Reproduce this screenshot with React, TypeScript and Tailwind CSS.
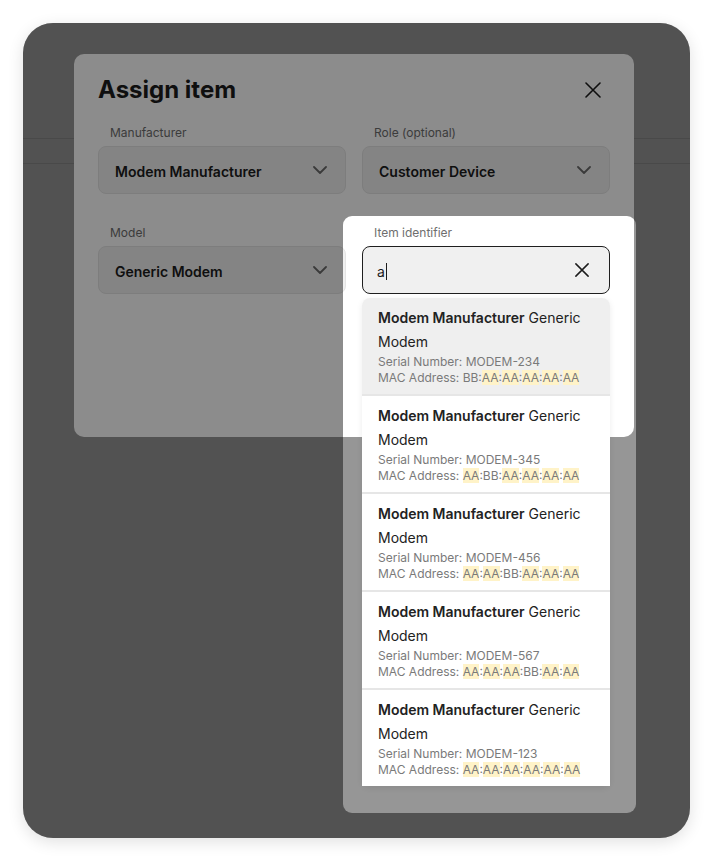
import React from "react";

type Option = {
  serial: string;
  mac: string[];
};

const options: Option[] = [
  { serial: "MODEM-234", mac: ["BB", "AA", "AA", "AA", "AA", "AA"] },
  { serial: "MODEM-345", mac: ["AA", "BB", "AA", "AA", "AA", "AA"] },
  { serial: "MODEM-456", mac: ["AA", "AA", "BB", "AA", "AA", "AA"] },
  { serial: "MODEM-567", mac: ["AA", "AA", "AA", "BB", "AA", "AA"] },
  { serial: "MODEM-123", mac: ["AA", "AA", "AA", "AA", "AA", "AA"] },
];

function Chevron() {
  return (
    <svg width="14" height="8" viewBox="0 0 14 8" fill="none" className="shrink-0">
      <path d="M1 1l6 6 6-6" stroke="#6b6b6b" strokeWidth="1.8" strokeLinecap="round" strokeLinejoin="round" />
    </svg>
  );
}

function Cross({ size, stroke = 2 }: { size: number; stroke?: number }) {
  return (
    <svg width={size} height={size} viewBox="0 0 16 16" fill="none" className="shrink-0">
      <path d="M1 1l14 14M15 1L1 15" stroke="#1c1c1c" strokeWidth={stroke} strokeLinecap="round" />
    </svg>
  );
}

function SelectField({ label, value }: { label: string; value: string }) {
  return (
    <div className="flex flex-col">
      <span className="pl-3 text-[12px] leading-[20px] text-[#6e6e6e]">{label}</span>
      <div className="mt-[3px] flex h-[48px] items-center justify-between rounded-[8px] border border-[#e4e4e4] bg-[#f0f0f0] pl-4 pr-[18px]">
        <span className="pt-[2px] text-[14px] font-semibold text-[#1c1c1c]">{value}</span>
        <Chevron />
      </div>
    </div>
  );
}

function OptionRow({ option, active, last }: { option: Option; active: boolean; last: boolean }) {
  return (
    <div
      className={`px-4 py-2 ${active ? "rounded-t-[8px] bg-[#efefef]" : "bg-white"} ${
        last ? "" : "border-b-2 border-[#e6e6e6]"
      }`}
    >
      <div className="text-[14px] leading-[24px] text-[#222]">
        <span className="font-semibold">Modem Manufacturer</span> Generic Modem
      </div>
      <div className="text-[12px] leading-[16px] text-[#7a7a7a]">Serial Number: {option.serial}</div>
      <div className="text-[12px] leading-[16px] text-[#7a7a7a]">
        MAC Address:{" "}
        {option.mac.map((part, i) => (
          <React.Fragment key={i}>
            {i > 0 && ":"}
            {part === "AA" ? <span className="bg-[#fff3c8]">{part}</span> : part}
          </React.Fragment>
        ))}
      </div>
    </div>
  );
}

export default function App() {
  return (
    <div className="h-[862px] w-[713px] bg-white pl-[23px] pt-[23px] font-['Inter','Liberation_Sans',sans-serif]">
      <div className="relative h-[815px] w-[667px] overflow-hidden rounded-[30px] bg-white shadow-[0_4px_16px_rgba(0,0,0,0.12)]">
        {/* page behind */}
        <div className="h-[116px] border-b border-[#e2e2e2]" />
        <div className="h-[25px] border-b border-[#e2e2e2]" />

        {/* modal backdrop */}
        <div className="absolute inset-0 bg-[rgba(0,0,0,0.41)] pl-[51px] pt-[31px]">
          <div className="relative h-[383px] w-[560px] rounded-[10px] bg-white px-6 pt-[20px]">
            <div className="flex items-center justify-between">
              <h1 className="text-[24px] font-bold leading-[32px] text-[#1c1c1c]">Assign item</h1>
              <div className="mr-[9px]">
                <Cross size={16} stroke={1.6} />
              </div>
            </div>

            <div className="mt-[17px] grid grid-cols-2 gap-x-4 gap-y-[29px]">
              <SelectField label="Manufacturer" value="Modem Manufacturer" />
              <SelectField label="Role (optional)" value="Customer Device" />
              <SelectField label="Model" value="Generic Modem" />

              <div className="relative flex flex-col">
                <span className="pl-3 text-[12px] leading-[20px] text-[#6e6e6e]">Item identifier</span>
                <div className="mt-[3px] flex h-[48px] items-center justify-between rounded-[8px] border border-[#1f1f1f] bg-[#f0f0f0] pl-[14px] pr-[20px]">
                  <div className="flex items-center pt-[2px]">
                    <span className="text-[14px] text-[#1c1c1c]">a</span>
                    <span className="ml-px h-[17px] w-px bg-[#1c1c1c]" />
                  </div>
                  <Cross size={14} stroke={1.7} />
                </div>

                {/* results popover */}
                <div className="absolute left-0 right-0 top-[75px] rounded-[8px] bg-white shadow-[0_2px_6px_rgba(0,0,0,0.08)]">
                  {options.map((option, i) => (
                    <OptionRow
                      key={option.serial}
                      option={option}
                      active={i === 0}
                      last={i === options.length - 1}
                    />
                  ))}
                </div>
              </div>
            </div>
          </div>
        </div>

        {/* tour spotlight */}
        <div className="pointer-events-none absolute left-[320px] top-[193px] h-[597px] w-[293px] rounded-[9px] shadow-[0_0_0_2000px_rgba(0,0,0,0.45)]" />
      </div>
    </div>
  );
}
